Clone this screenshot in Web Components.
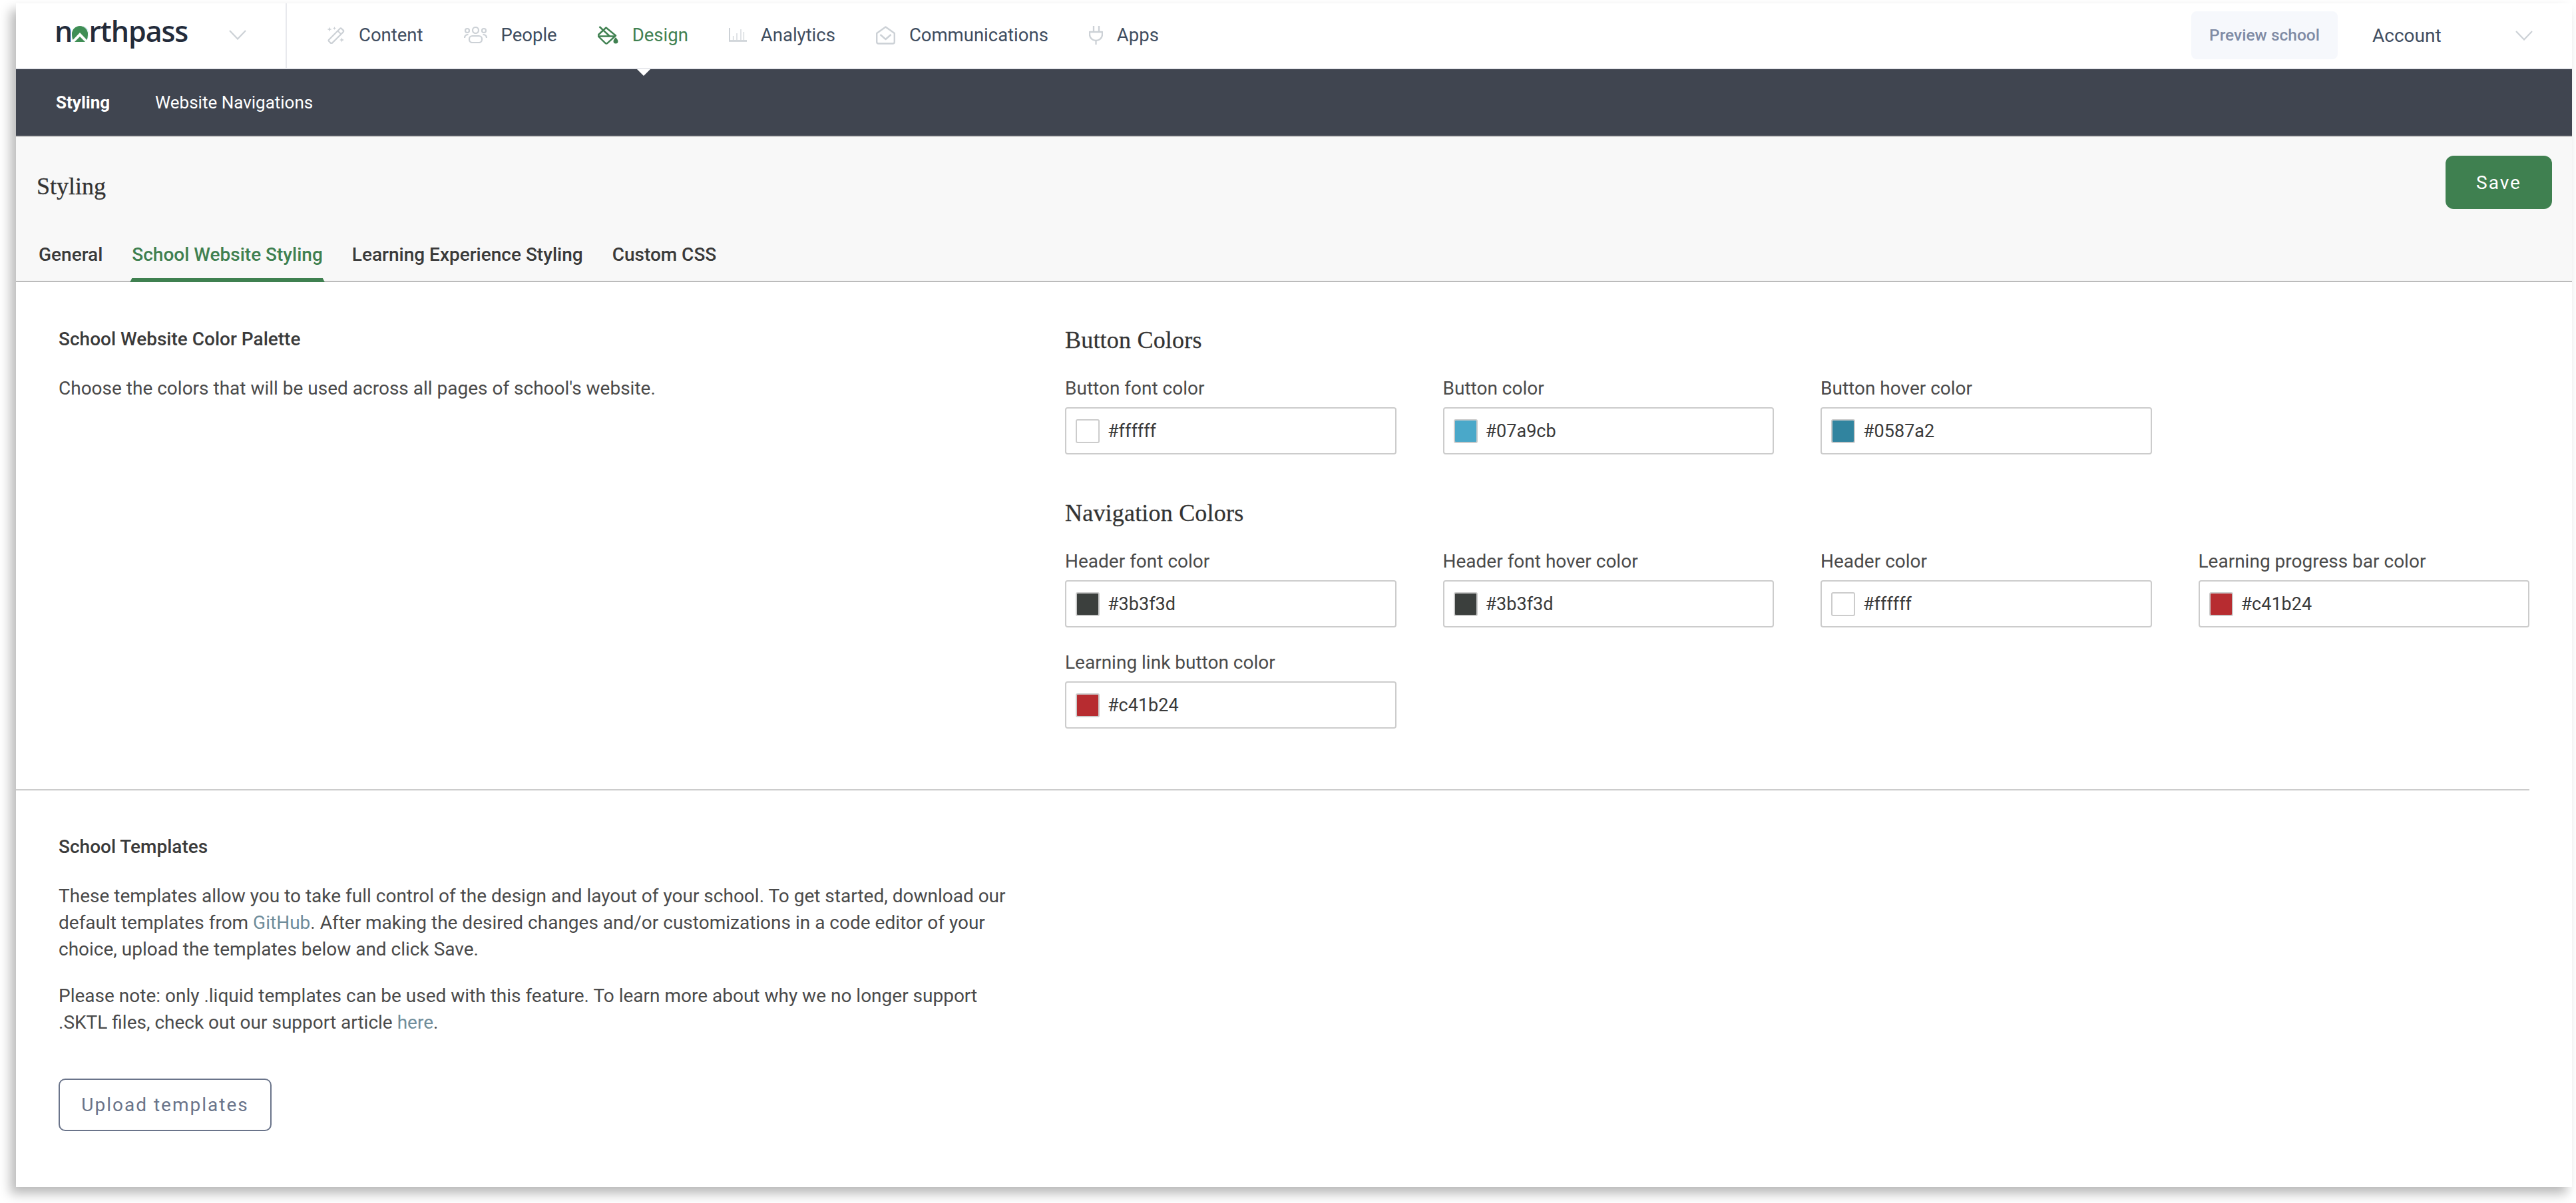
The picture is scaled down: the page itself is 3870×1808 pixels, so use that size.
<!doctype html>
<html>
<head>
<meta charset="utf-8">
<title>Styling</title>
<style>
    html, body { margin: 0; background: #fff; }
    body { font-family: Roboto, "Liberation Sans", sans-serif; color: #333; width: 3870px; height: 1808px; overflow: hidden; }
    a { color: #6f8d9b; text-decoration: none; }
    p span { display: block; white-space: nowrap; }
</style>
</head>
<body>
<app-shell>
    <top-bar slot="top">
        <nav-item icon="wand">Content</nav-item>
        <nav-item icon="people">People</nav-item>
        <nav-item icon="bucket" active>Design</nav-item>
        <nav-item icon="chart">Analytics</nav-item>
        <nav-item icon="mail">Communications</nav-item>
        <nav-item icon="plug">Apps</nav-item>
    </top-bar>
    <sub-bar slot="top"></sub-bar>
    <page-head slot="top"></page-head>

    <palette-section>
        <section-copy slot="copy" heading="School Website Color Palette">
            <p>Choose the colors that will be used across all pages of school's website.</p>
        </section-copy>
        <color-group heading="Button Colors">
            <color-field label="Button font color" value="#ffffff"></color-field>
            <color-field label="Button color" value="#07a9cb" show="#4aa8c9"></color-field>
            <color-field label="Button hover color" value="#0587a2" show="#31849f"></color-field>
        </color-group>
        <color-group heading="Navigation Colors" class="second">
            <color-field label="Header font color" value="#3b3f3d"></color-field>
            <color-field label="Header font hover color" value="#3b3f3d"></color-field>
            <color-field label="Header color" value="#ffffff"></color-field>
            <color-field label="Learning progress bar color" value="#c41b24" show="#b72c30"></color-field>
            <color-field label="Learning link button color" value="#c41b24" show="#b72c30"></color-field>
        </color-group>
    </palette-section>

    <templates-section>
        <section-copy heading="School Templates">
            <p>
                <span>These templates allow you to take full control of the design and layout of your school. To get started, download our</span>
                <span>default templates from <a href="#">GitHub</a>. After making the desired changes and/or customizations in a code editor of your</span>
                <span>choice, upload the templates below and click Save.</span>
            </p>
            <p>
                <span>Please note: only .liquid templates can be used with this feature. To learn more about why we no longer support</span>
                <span>.SKTL files, check out our support article <a href="#">here</a>.</span>
            </p>
        </section-copy>
    </templates-section>
</app-shell>

<script>
    (function(window, document) {

        var chevron = '<svg width="26" height="15" viewBox="0 0 26 15" fill="none" stroke="#ccd1d6" stroke-width="2.2"><path d="M1 1l12 12.500L25 1"/></svg>';

        var icons = {
            wand: '<svg width="27" height="26" viewBox="0 0 27 26" fill="none" stroke="#ccd1d6" stroke-width="2.2" stroke-linejoin="round"><path d="M19.500 3.200a2 2 0 0 1 2.800 0l2.200 2.200a2 2 0 0 1 0 2.800L8.300 24.400a2 2 0 0 1-2.800 0l-2.200-2.200a2 2 0 0 1 0-2.800z"/><path d="M16.500 6.500l5 5" stroke-width="1.800"/><path d="M4 .5l1 2.500 2.500 1-2.500 1-1 2.500-1-2.500L.5 4l2.500-1zM22.500 16.500l1 2.500 2.500 1-2.500 1-1 2.500-1-2.500-2.500-1 2.500-1z" fill="#ccd1d6" stroke="none"/><path d="M11.500 0l.7 1.800 1.800.7-1.800.7-.7 1.800-.7-1.800L9 2.500l1.800-.7z" fill="#ccd1d6" stroke="none"/></svg>',
            people: '<svg width="35" height="25" viewBox="0 0 35 25" fill="none" stroke="#ccd1d6" stroke-width="2.200"><circle cx="5" cy="6" r="3"/><circle cx="17.500" cy="5.500" r="4.500"/><circle cx="30" cy="6" r="3"/><path d="M1 17c0-3 2-5 5.500-5M34 17c0-3-2-5-5.500-5"/><rect x="8" y="14" width="19" height="10" rx="4.500"/></svg>',
            bucket: '<svg width="31" height="28" viewBox="0 0 31 28" fill="none" stroke="#3f8050" stroke-width="2.400" stroke-linejoin="round"><path d="M12.500 2.500L27 14.500 14.500 25.800a2.200 2.200 0 0 1-3 0L1.300 16a2 2 0 0 1 0-3z"/><path d="M2.500 1L18 15.500M2 15.500h24"/><path d="M27 17c1.500 2.200 3.500 4 3.500 6a3.500 3.500 0 0 1-7 0c0-2 2-3.800 3.500-6z" fill="#3f8050" stroke="none"/></svg>',
            chart: '<svg width="27" height="21" viewBox="0 0 27 21" fill="none" stroke="#ccd1d6"><path d="M1 0v19" stroke-width="2"/><path d="M0 19.500h27" stroke-width="2.600"/><path d="M6.500 12v6M12 8v10M18 2v16M22.500 6v12" stroke-width="1.200"/></svg>',
            mail: '<svg width="29" height="28" viewBox="0 0 29 28" fill="none" stroke="#ccd1d6" stroke-width="2.400" stroke-linejoin="round"><path d="M14.500 1.500L27.800 11v13a2.500 2.500 0 0 1-2.500 2.500H3.700A2.500 2.500 0 0 1 1.200 24V11z"/><path d="M6.500 13l8 7 8-7"/></svg>',
            plug: '<svg width="21" height="28" viewBox="0 0 21 28" fill="none" stroke="#ccd1d6" stroke-width="2.300" stroke-linejoin="round"><path d="M7 0v9M15 0v9"/><path d="M1 9h19v4c0 5-4.500 9-9.500 9S1 18 1 13z"/><path d="M10.500 22v6"/></svg>'
        };

        class AppShell extends HTMLElement {
            constructor() {
                super();
                this.attachShadow({mode: 'open'}).innerHTML = `
                    <style>
                        :host { display: block; width: 3840px; height: 1779px; margin: 5px 0 0 24px; background: #fff; box-shadow: -8px 10px 16px rgba(0,0,0,.28); overflow: visible; }
                    </style>
                    <slot name="top"></slot>
                    <slot></slot>`;
            }
        }

        class TopBar extends HTMLElement {
            constructor() {
                super();
                this.attachShadow({mode: 'open'}).innerHTML = `
                    <style>
                        :host { display: flex; align-items: stretch; height: 97px; border-bottom: 2px solid #e8e9ed; background: #fff; position: relative; }
                        .brand { width: 407px; box-sizing: border-box; border-right: 2px solid #e8e9ed; display: flex; align-items: center; padding-left: 58px; gap: 60px; }
                        .logo { font: 600 43px "Open Sans", sans-serif; letter-spacing: -1.1px; color: #232b3a; line-height: 97px; position: relative; top: -7px; width: 202px; flex: none; white-space: nowrap; }
                        .logo b { font-weight: inherit; position: relative; }
                        .logo svg { position: absolute; left: -1px; top: 21px; }
                        .brand > svg { position: relative; top: -1px; }
                        nav { display: flex; align-items: center; gap: 61px; padding-left: 60px; flex: 1; }
                        .right { display: flex; align-items: center; padding-right: 59px; }
                        .preview { width: 220px; height: 72px; background: #f6f8fc; border-radius: 8px; display: flex; align-items: center; justify-content: center; font-size: 24.500px; font-weight: 500; color: #7f8ba5; margin-top: -2px; }
                        .account { font-size: 28px; color: #3f4d5f; margin-left: 52px; width: 215px; margin-top: -1px; }
                    </style>
                    <div class="brand">
                        <span class="logo">n<b>o<svg width="26" height="26" viewBox="0 0 26 26"><circle cx="13" cy="13" r="13" fill="#fff"/><path d="M1 13a12 12 0 0 1 24 0c0 4-.6 7-1.500 9L13 11 2.500 22C1.500 20 1 17 1 13z" fill="#3f8e55"/><path d="M13 17l8 8H5z" fill="#3f8e55"/></svg></b>rthpass</span>
                        ${chevron}
                    </div>
                    <nav><slot></slot></nav>
                    <div class="right">
                        <div class="preview">Preview school</div>
                        <div class="account">Account</div>
                        ${chevron}
                    </div>`;
            }
        }

        class NavItem extends HTMLElement {
            constructor() {
                super();
                var active = this.hasAttribute('active');
                this.attachShadow({mode: 'open'}).innerHTML = `
                    <style>
                        :host { display: flex; align-items: center; gap: 21px; font-size: 27.500px; color: ${active ? '#3f8050' : '#3f4d5f'}; position: relative; margin-top: -2px; }
                        svg { display: block; }
                        .tip { position: absolute; left: 59px; top: 68px; width: 0; height: 0; border: 10px solid transparent; border-top-color: #fff; border-bottom: 0; }
                    </style>
                    ${icons[this.getAttribute('icon')]}
                    <slot></slot>
                    ${active ? '<div class="tip"></div>' : ''}`;
            }
        }

        class SubBar extends HTMLElement {
            constructor() {
                super();
                this.attachShadow({mode: 'open'}).innerHTML = `
                    <style>
                        :host { display: flex; align-items: center; gap: 68px; height: 100px; padding-left: 60px; background: #404550; border-bottom: 2px solid #c8c8c8; color: #fff; font-size: 26px; }
                        b { font-weight: 700; }
                    </style>
                    <b>Styling</b>
                    <span>Website Navigations</span>`;
            }
        }

        class PageHead extends HTMLElement {
            constructor() {
                super();
                this.attachShadow({mode: 'open'}).innerHTML = `
                    <style>
                        :host { display: block; box-sizing: border-box; height: 218px; padding: 28px 30px 0 31px; background: #f8f8f8; border-bottom: 2px solid #bbb; }
                        .row { display: flex; justify-content: space-between; height: 80px; }
                        h1 { margin: 6px 0 0; font: 400 36px/80px "Liberation Serif", serif; color: #333; -webkit-text-stroke: .3px #333; }
                        button { width: 160px; height: 80px; border: 0; border-radius: 12px; background: #3f8050; color: #fff; font: 400 28px Roboto, sans-serif; letter-spacing: 2px; }
                        .tabs { display: flex; gap: 38px; margin-top: 30px; height: 80px; }
                        .tab { position: relative; padding: 0 3px; line-height: 78px; font-size: 28px; font-weight: 500; color: #3a3a3a; }
                        .tab.on { color: #3f8050; }
                        .tab.on::after { content: ""; position: absolute; left: 0; right: 0; bottom: 0; height: 6px; background: #3f8050; clip-path: polygon(3px 0, calc(100% - 3px) 0, 100% 100%, 0 100%); }
                    </style>
                    <div class="row"><h1>Styling</h1><button>Save</button></div>
                    <div class="tabs">
                        <div class="tab">General</div>
                        <div class="tab on">School Website Styling</div>
                        <div class="tab">Learning Experience Styling</div>
                        <div class="tab">Custom CSS</div>
                    </div>`;
            }
        }

        class PaletteSection extends HTMLElement {
            constructor() {
                super();
                this.attachShadow({mode: 'open'}).innerHTML = `
                    <style>
                        :host { display: grid; grid-template-columns: 1512px 2200px; margin-right: 64px; padding: 65px 0 91px 64px; border-bottom: 2px solid #ccc; }
                        .left { padding-top: 6px; }
                    </style>
                    <div class="left"><slot name="copy"></slot></div>
                    <div><slot></slot></div>`;
            }
        }

        class SectionCopy extends HTMLElement {
            constructor() {
                super();
                var title = this.getAttribute('heading');
                this.attachShadow({mode: 'open'}).innerHTML = `
                    <style>
                        :host { display: block; }
                        h3 { margin: 0 0 39px; font-size: 28px; line-height: 30px; font-weight: 500; color: #3a3a3a; }
                        ::slotted(p) { margin: 0 0 30px; font-size: 28px; line-height: 40px; color: #4a4a4a; width: 1440px; }
                    </style>
                    <h3>${title}</h3>
                    <slot></slot>`;
            }
        }

        class ColorGroup extends HTMLElement {
            constructor() {
                super();
                this.attachShadow({mode: 'open'}).innerHTML = `
                    <style>
                        :host { display: block; }
                        :host(.second) { margin-top: 66px; }
                        h2 { margin: 0 0 36px; font: 400 36px/44px "Liberation Serif", serif; letter-spacing: .2px; color: #333; -webkit-text-stroke: .3px #333; }
                        .grid { display: grid; grid-template-columns: repeat(4, 497.5px); column-gap: 70px; row-gap: 38px; }
                    </style>
                    <h2>${this.getAttribute('heading')}</h2>
                    <div class="grid"><slot></slot></div>`;
            }
        }

        class ColorField extends HTMLElement {
            constructor() {
                super();
                var value = this.getAttribute('value');
                var show = this.getAttribute('show') || value;
                this.attachShadow({mode: 'open'}).innerHTML = `
                    <style>
                        :host { display: block; font-size: 28px; color: #4a4a4a; }
                        label { display: block; line-height: 30px; margin-bottom: 13px; }
                        .box { box-sizing: border-box; height: 71px; border: 2px solid #ccc; border-radius: 4px; display: flex; align-items: center; gap: 12px; padding-left: 14px; background: #fff; color: #3a3a3a; font-size: 27px; }
                        i { box-sizing: border-box; width: 36px; height: 36px; border: 2px solid #ccc; border-radius: 3px; background: ${show}; }
                    </style>
                    <label>${this.getAttribute('label')}</label>
                    <div class="box"><i></i><span>${value}</span></div>`;
            }
        }

        class TemplatesSection extends HTMLElement {
            constructor() {
                super();
                this.attachShadow({mode: 'open'}).innerHTML = `
                    <style>
                        :host { display: block; padding: 70px 0 0 64px; }
                        button { display: block; box-sizing: border-box; width: 320px; height: 79px; margin-top: 64px; background: #fff; border: 2px solid #6a748a; border-radius: 10px; color: #6a748a; font: 400 28px Roboto, sans-serif; letter-spacing: 2px; }
                    </style>
                    <slot></slot>
                    <button>Upload templates</button>`;
            }
        }

        window.customElements.define('app-shell', AppShell);
        window.customElements.define('top-bar', TopBar);
        window.customElements.define('nav-item', NavItem);
        window.customElements.define('sub-bar', SubBar);
        window.customElements.define('page-head', PageHead);
        window.customElements.define('palette-section', PaletteSection);
        window.customElements.define('section-copy', SectionCopy);
        window.customElements.define('color-group', ColorGroup);
        window.customElements.define('color-field', ColorField);
        window.customElements.define('templates-section', TemplatesSection);
    })(window, document);
</script>
</body>
</html>
